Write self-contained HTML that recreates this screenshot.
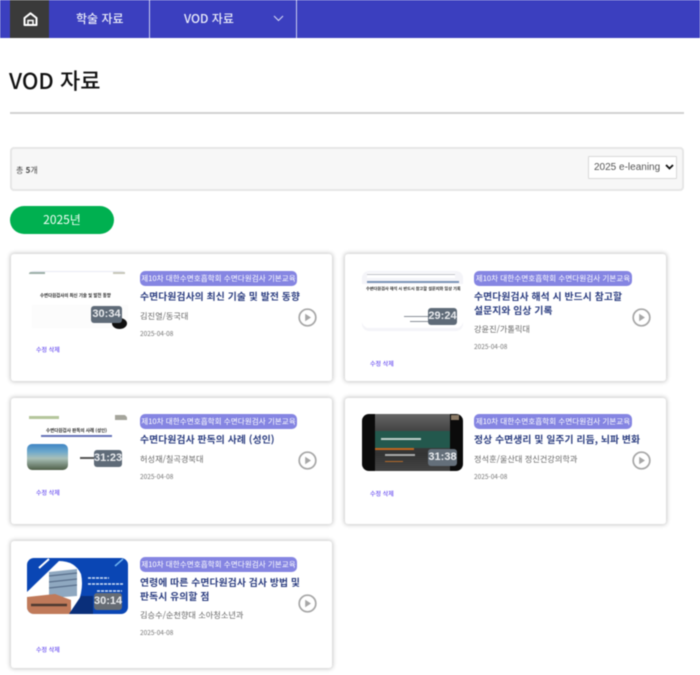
<!DOCTYPE html>
<html lang="ko">
<head>
<meta charset="utf-8">
<title>VOD 자료</title>
<style>
html,body{margin:0;padding:0;background:#fff}
body{width:700px;height:675px;overflow:hidden;position:relative;font-family:"Noto Sans CJK KR","Liberation Sans",sans-serif;}
#w{position:absolute;left:0;top:0;width:700px;height:675px;filter:blur(.4px);overflow:hidden}
#w div,#w svg{position:absolute;white-space:nowrap}
.card{background:#fff;border-radius:3px;box-shadow:0 0 4px 1px rgba(0,0,0,.22);width:321px}
.th{width:101px;overflow:hidden;border-radius:7px;background:#fff}
.tm{background:#5f6b78;color:#e9ebee;border-radius:3px;font-family:"Liberation Sans",sans-serif;font-size:11px;font-weight:bold;text-align:center;width:31px;height:17px;line-height:17px}
.bd{background:#8585e2;color:#fff;border-radius:5px;width:157px;height:15px;line-height:15px;font-size:7.600px;text-align:center}
.t{color:#2b3d80;font-size:9.800px;font-weight:bold;line-height:14px;letter-spacing:.1px}
.au{color:#666;font-size:8.200px;line-height:12px}
.dt{color:#777;font-size:6.500px;line-height:10px}
.ed{color:#6a50f0;font-size:6px;line-height:8px;font-weight:500}
</style>
</head>
<body>
<div id="w">
  <!-- nav -->
  <div style="left:0;top:0;width:700px;height:38px;background:#3b3fbf"></div>
  <div style="left:10px;top:0;width:39px;height:38px;background:#3a3a3a"></div>
  <svg style="left:23px;top:12px" width="15" height="14" viewBox="0 0 15 14"><path d="M1.500 6 7.500 1.300 13.500 6V13H1.500Z" fill="none" stroke="#fff" stroke-width="2" stroke-linejoin="round"/><path d="M5 13V8.500H10V13" fill="none" stroke="#fff" stroke-width="1.500"/></svg>
  <div style="left:149px;top:0;width:1px;height:38px;background:#c9cbef"></div>
  <div style="left:296px;top:0;width:1px;height:38px;background:#c9cbef"></div>
  <div style="left:76px;top:10px;font-size:12px;line-height:17px;color:#eceefa;font-weight:500">학술 자료</div>
  <div style="left:184px;top:10px;font-size:12px;line-height:17px;color:#eceefa;font-weight:500">VOD 자료</div>
  <svg style="left:273px;top:15px" width="11" height="7" viewBox="0 0 11 7"><path d="M1 1 5.500 5.500 10 1" fill="none" stroke="#d5d7f3" stroke-width="1.100"/></svg>

  <!-- title -->
  <div style="left:9px;top:64px;font-size:22px;line-height:32px;color:#111;font-weight:500">VOD 자료</div>
  <div style="left:10px;top:112px;width:674px;height:2px;background:#d2d2d2"></div>

  <!-- toolbar -->
  <div style="left:10px;top:147px;width:670px;height:40px;background:#f7f7f7;border:2px solid #e6e6e6;border-radius:4px"></div>
  <div style="left:16px;top:165px;font-size:8px;line-height:11px;color:#444">총 <b>5</b>개</div>
  <div style="left:588px;top:156px;width:87px;height:21px;background:#fff;border:1px solid #d8d8d8;border-radius:1px"></div>
  <div style="left:594px;top:161px;font-size:10px;line-height:14px;color:#555;font-family:'Liberation Sans',sans-serif">2025 e-leaning</div>
  <svg style="left:665px;top:164px" width="9" height="6" viewBox="0 0 9 6"><path d="M1 1 4.500 4.500 8 1" fill="none" stroke="#111" stroke-width="1.800"/></svg>

  <!-- pill -->
  <div style="left:10px;top:206px;width:104px;height:28px;line-height:28px;border-radius:14px;background:#00b050;color:#f2fff6;font-size:12px;text-align:center">2025년</div>

  <!-- card 1 -->
  <div class="card" style="left:11px;top:254px;height:127px"></div>
  <div class="th" style="left:27px;top:271px;height:58px">
    <div style="left:0;top:0;width:101px;height:1px;background:#e8eaf4"></div>
    <div style="left:2px;top:1px;width:16px;height:2px;background:#9db0a8"></div>
    <div style="left:86px;top:1px;width:12px;height:2px;background:#c7c7ba"></div>
    <div style="left:13px;top:21px;font-size:4.400px;line-height:8px;color:#222;font-weight:bold">수면다원검사의 최신 기술 및 발전 동향</div>
    <div style="left:5px;top:34px;width:96px;height:23px;background:#fcfcfc"></div>
    <div style="left:85px;top:47px;width:15px;height:11px;border-radius:50%;background:#111"></div>
  </div>
  <div class="tm" style="left:91px;top:306px">30:34</div>
  <div class="bd" style="left:140px;top:271px">제10차 대한수면호흡학회 수면다원검사 기본교육</div>
  <div class="t" style="left:140px;top:289px">수면다원검사의 최신 기술 및 발전 동향</div>
  <div class="au" style="left:140px;top:310px">김진열/동국대</div>
  <div class="dt" style="left:140px;top:328px">2025-04-08</div>
  <div class="ed" style="left:36px;top:346px">수정 삭제</div>
  <svg style="left:298px;top:308px" width="19" height="19" viewBox="0 0 19 19"><circle cx="9.500" cy="9.500" r="8.300" fill="#fff" stroke="#a6a6a6" stroke-width="1.700"/><path d="M7.200 5.800 13 9.500 7.200 13.200Z" fill="#a6a6a6"/></svg>

  <!-- card 2 -->
  <div class="card" style="left:345px;top:254px;height:127px"></div>
  <div class="th" style="left:362px;top:271px;height:60px;background:#f4f4f8">
    <div style="left:5px;top:2px;width:88px;height:5px;background:#fff"></div>
    <div style="left:5px;top:3px;width:88px;height:1px;background:#bfc2c8"></div>
    <div style="left:5px;top:10px;width:92px;height:1.500px;background:#7c95b8"></div>
    <div style="left:0;top:13px;width:101px;height:44px;background:#fff;border-radius:0 0 7px 7px"></div>
    <div style="left:4px;top:15px;font-size:4.100px;line-height:7px;color:#222;font-weight:bold">수면다원검사 해석 시 반드시 참고할 설문지와 임상 기록</div>
    <div style="left:42px;top:45px;width:24px;height:1px;background:#8a8f98"></div>
    <div style="left:48px;top:50px;width:18px;height:1px;background:#8a8f98"></div>
  </div>
  <div class="tm" style="left:428px;top:308px;width:29px">29:24</div>
  <div class="bd" style="left:474px;top:271px;width:158px">제10차 대한수면호흡학회 수면다원검사 기본교육</div>
  <div class="t" style="left:474px;top:289px">수면다원검사 해석 시 반드시 참고할<br>설문지와 임상 기록</div>
  <div class="au" style="left:474px;top:323px">강윤진/가톨릭대</div>
  <div class="dt" style="left:474px;top:341px">2025-04-08</div>
  <div class="ed" style="left:370px;top:360px">수정 삭제</div>
  <svg style="left:632px;top:308px" width="19" height="19" viewBox="0 0 19 19"><circle cx="9.500" cy="9.500" r="8.300" fill="#fff" stroke="#a6a6a6" stroke-width="1.700"/><path d="M7.200 5.800 13 9.500 7.200 13.200Z" fill="#a6a6a6"/></svg>

  <!-- card 3 -->
  <div class="card" style="left:11px;top:398px;height:126px"></div>
  <div class="th" style="left:27px;top:414px;height:57px">
    <div style="left:2px;top:2px;width:30px;height:3px;background:#b5c69c"></div>
    <div style="left:88px;top:1px;width:12px;height:5px;background:#a5a59c"></div>
    <div style="left:19px;top:13px;font-size:4.500px;line-height:8px;color:#222;font-weight:bold">수면다원검사 판독의 사례 (성인)</div>
    <div style="left:14px;top:21px;width:71px;height:1.500px;background:#6673b8"></div>
    <div style="left:0;top:30px;width:41px;height:26px;border-radius:5px;background:linear-gradient(180deg,#3f85c4 0%,#6ea9cc 30%,#a9c0b8 55%,#4f5f48 100%)"></div>
    <div style="left:53px;top:43px;width:14px;height:1.500px;background:#555"></div>
  </div>
  <div class="tm" style="left:94px;top:450px;width:28px">31:23</div>
  <div class="bd" style="left:140px;top:414px">제10차 대한수면호흡학회 수면다원검사 기본교육</div>
  <div class="t" style="left:140px;top:432px">수면다원검사 판독의 사례 (성인)</div>
  <div class="au" style="left:140px;top:453px">허성재/칠곡경북대</div>
  <div class="dt" style="left:140px;top:471px">2025-04-08</div>
  <div class="ed" style="left:36px;top:489px">수정 삭제</div>
  <svg style="left:298px;top:451px" width="19" height="19" viewBox="0 0 19 19"><circle cx="9.500" cy="9.500" r="8.300" fill="#fff" stroke="#a6a6a6" stroke-width="1.700"/><path d="M7.200 5.800 13 9.500 7.200 13.200Z" fill="#a6a6a6"/></svg>

  <!-- card 4 -->
  <div class="card" style="left:345px;top:398px;height:126px"></div>
  <div class="th" style="left:362px;top:414px;height:57px;background:#0b0b0b">
    <div style="left:13px;top:0;width:75px;height:57px;background:linear-gradient(180deg,#666 0%,#444 30%,#333 70%,#444 100%)"></div>
    <div style="left:13px;top:17px;width:75px;height:17px;background:#23584d"></div>
    <div style="left:13px;top:34px;width:39px;height:1.500px;background:#c0651f"></div>
    <div style="left:19px;top:24px;width:40px;height:1.500px;background:#bfcfca"></div>
    <div style="left:23px;top:40px;width:30px;height:1.500px;background:#aaa"></div>
    <div style="left:23px;top:47px;width:18px;height:1px;background:#b36a2a"></div>
    <div style="left:89px;top:1px;width:8px;height:5px;background:#8b7a66"></div>
  </div>
  <div class="tm" style="left:428px;top:449px;width:29px;background:#646f7a">31:38</div>
  <div class="bd" style="left:474px;top:414px;width:158px">제10차 대한수면호흡학회 수면다원검사 기본교육</div>
  <div class="t" style="left:474px;top:432px">정상 수면생리 및 일주기 리듬, 뇌파 변화</div>
  <div class="au" style="left:474px;top:453px">정석훈/울산대 정신건강의학과</div>
  <div class="dt" style="left:474px;top:471px">2025-04-08</div>
  <div class="ed" style="left:370px;top:490px">수정 삭제</div>
  <svg style="left:632px;top:451px" width="19" height="19" viewBox="0 0 19 19"><circle cx="9.500" cy="9.500" r="8.300" fill="#fff" stroke="#a6a6a6" stroke-width="1.700"/><path d="M7.200 5.800 13 9.500 7.200 13.200Z" fill="#a6a6a6"/></svg>

  <!-- card 5 -->
  <div class="card" style="left:11px;top:541px;height:127px"></div>
  <div class="th" style="left:27px;top:558px;height:56px;background:#0a46b4">
    <svg style="left:0;top:0" width="101" height="56" viewBox="0 0 101 56">
      <path d="M0 34 32 3Q48 3 54 16 58 34 46 56H0Z" fill="#fff"/>
      <path d="M22 14 50 11 50 38 22 40Z" fill="#8fa8c0"/>
      <path d="M22 18 50 15M22 24 50 21M22 30 50 27" stroke="#5a708c" stroke-width="1.200"/>
      <path d="M0 39 28 36 44 42 44 56 0 56Z" fill="#c07a5a"/>
      <path d="M4 47H40" stroke="#4f3a30" stroke-width="2.500"/>
      <path d="M42 56 54 38 66 38 66 56Z" fill="#0a2f7a"/>
      <path d="M12 10 22 1" stroke="#fff" stroke-width="2"/>
      <path d="M88 8 96 1" stroke="#6fb3f0" stroke-width="1.500"/>
      <path d="M61 20H82M61 26H96M70 33H95" stroke="#d5e3f7" stroke-width="1.500" stroke-dasharray="3 1"/>
    </svg>
  </div>
  <div class="tm" style="left:94px;top:593px;width:28px;background:#666c74">30:14</div>
  <div class="bd" style="left:140px;top:557px">제10차 대한수면호흡학회 수면다원검사 기본교육</div>
  <div class="t" style="left:140px;top:575px">연령에 따른 수면다원검사 검사 방법 및<br>판독시 유의할 점</div>
  <div class="au" style="left:140px;top:609px">김승수/순천향대 소아청소년과</div>
  <div class="dt" style="left:140px;top:627px">2025-04-08</div>
  <div class="ed" style="left:36px;top:646px">수정 삭제</div>
  <svg style="left:298px;top:594px" width="19" height="19" viewBox="0 0 19 19"><circle cx="9.500" cy="9.500" r="8.300" fill="#fff" stroke="#a6a6a6" stroke-width="1.700"/><path d="M7.200 5.800 13 9.500 7.200 13.200Z" fill="#a6a6a6"/></svg>
</div>
</body>
</html>
